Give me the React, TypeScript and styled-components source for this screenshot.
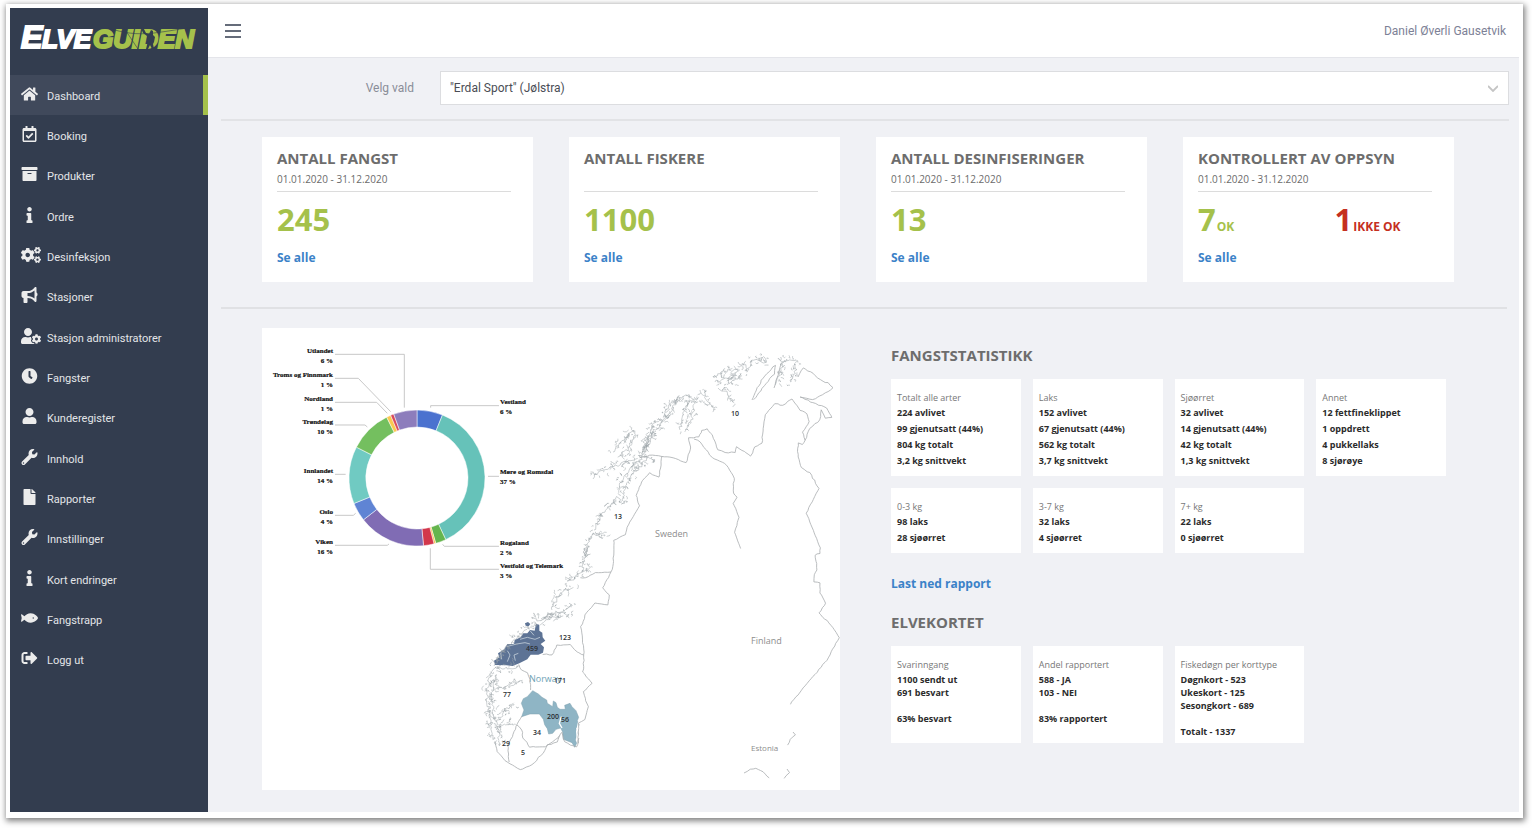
import React from 'react';
import styled, { createGlobalStyle } from 'styled-components';
import {
  FaHome, FaRegCalendarCheck, FaArchive, FaInfo, FaCogs, FaUserCog, FaClock,
  FaUser, FaWrench, FaFile, FaFish, FaSignOutAlt,
} from 'react-icons/fa';
import { FaBullhorn } from 'react-icons/fa6';

const GlobalStyle = createGlobalStyle`
  *, *::before, *::after { box-sizing: border-box; }
  body {
    margin: 0;
    background: #fff;
    font-family: "Open Sans", "Noto Sans", sans-serif;
    color: #6b6b6b;
  }
  ul, p, h2 { margin: 0; padding: 0; }
  ul { list-style: none; }
`;

const roboto = 'Roboto, "Liberation Sans", sans-serif';

/* ---------- shell ---------- */

const Frame = styled.div`
  display: flex;
  min-height: calc(100vh - 14px);
  margin: 4px 9px 10px 6px;
  padding: 4px 4px 6px;
  background: #fff;
  box-shadow: 1px 2px 6px 1px rgba(0, 0, 0, 0.5);
`;

const Sidebar = styled.nav`
  flex: 0 0 198px;
  background: #333d4f;
`;

const LogoLink = styled.a`
  display: block;
  height: 67px;
  padding: 8px 10px;
`;

const Menu = styled.ul`
  display: grid;
  grid-auto-rows: 1fr;
  min-height: 605px;
`;

const MenuLink = styled.a<{ $active?: boolean }>`
  display: flex;
  align-items: center;
  gap: 9px;
  height: 100%;
  padding: 3px 0 0 11px;
  border-right: 5px solid ${(p) => (p.$active ? '#a5c14b' : 'transparent')};
  background: ${(p) => (p.$active ? '#40495b' : 'transparent')};
  color: #e3e5e8;
  font: 11px/16px ${roboto};
  text-decoration: none;
`;

const MenuIcon = styled.span<{ $wide?: boolean }>`
  display: flex;
  width: 17px;
  padding-bottom: 6px;
  color: #ececec;
  svg { flex: none; width: ${(p) => (p.$wide ? 20 : 17)}px; height: 16px; }
`;

const Main = styled.div`
  flex: 1;
  min-width: 0;
  background: #f0f1f5;
`;

const Header = styled.header`
  display: flex;
  align-items: center;
  justify-content: space-between;
  height: 50px;
  padding: 0 13px 4px 16px;
  border-bottom: 1px solid #e4e5ea;
  background: #fff;
`;

const MenuButton = styled.button`
  display: flex;
  padding: 0;
  border: 0;
  background: none;
  color: #333d4f;
`;

const UserName = styled.span`
  color: #7d8196;
  font: 12px/16px ${roboto};
`;

const Content = styled.main`
  padding: 13px 10px 20px 13px;
`;

/* ---------- filter ---------- */

const Filter = styled.div`
  display: flex;
  align-items: center;
  gap: 26px;
  padding-bottom: 14px;
  border-bottom: 2px solid #e2e3e6;
`;

const FilterLabel = styled.label`
  flex: 0 0 193px;
  color: #8a8d98;
  font: 12px/16px ${roboto};
  text-align: right;
`;

const SelectBox = styled.div`
  position: relative;
  flex: 1;
  svg { position: absolute; right: 11px; top: 14px; pointer-events: none; }
`;

const Select = styled.select`
  display: block;
  width: 100%;
  height: 34px;
  padding: 0 30px 0 9px;
  border: 1px solid #dcdde0;
  border-radius: 0;
  appearance: none;
  background: #fff;
  color: #4a4d55;
  font: 12px/16px ${roboto};
`;

/* ---------- cards ---------- */

const Section = styled.section`
  display: grid;
  grid-template-columns: repeat(4, minmax(0, 1fr));
  column-gap: 36px;
  align-items: start;
  padding: 16px 55px 0 41px;
`;

const Divider = styled.hr`
  height: 2px;
  margin: 25px 2px 0 0;
  border: 0;
  background: #e0e1e4;
`;

const Card = styled.article`
  height: 145px;
  padding: 11px 22px 0 15px;
  background: #fff;
`;

const Title = styled.h2`
  color: #6d6d6d;
  font-size: 15px;
  font-weight: 700;
  line-height: 20px;
  white-space: nowrap;
`;

const Period = styled.p`
  height: 24px;
  border-bottom: 1px solid #dcdcdc;
  font-size: 10px;
  line-height: 22px;
`;

const Figures = styled.div`
  display: grid;
  grid-template-columns: minmax(0, 7fr) minmax(0, 5fr);
  height: 40px;
  margin-top: 7px;
`;

const Figure = styled.p<{ $bad?: boolean }>`
  color: ${(p) => (p.$bad ? '#c5301f' : '#a5c14b')};
  font-size: 31px;
  font-weight: 700;
  line-height: 40px;
  white-space: nowrap;
  small { margin-left: 1px; font-size: 12px; line-height: 16px; }
`;

const TextLink = styled.a`
  color: #3b82c8;
  font-size: 12px;
  font-weight: 700;
  line-height: 20px;
  text-decoration: none;
`;

const CardLink = styled(TextLink)`
  display: inline-block;
  margin-top: 9px;
`;

/* ---------- statistics ---------- */

const Overview = styled(Section)`
  padding-top: 19px;
`;

const MapPanel = styled.div`
  grid-column: span 2;
  background: #fff;
  svg { display: block; width: 100%; height: auto; }
`;

const Stats = styled.div`
  grid-column: span 2;
  padding: 17px 8px 0 15px;
`;

const Tiles = styled.div`
  display: grid;
  grid-template-columns: repeat(4, minmax(0, 1fr));
  gap: 12px;
  margin: 14px 0 18px;
`;

const Tile = styled.div<{ $tight?: boolean }>`
  padding: ${(p) => (p.$tight ? '11px 0 5px 6px' : '11px 0 7px 6px')};
  background: #fff;
  color: #2b2b2b;
  font-size: 9px;
  font-weight: 700;
  line-height: ${(p) => (p.$tight ? 13 : 16)}px;
  white-space: nowrap;
`;

const TileLabel = styled.p<{ $tight?: boolean }>`
  color: #777;
  font-weight: 400;
  line-height: ${(p) => (p.$tight ? 16 : 15)}px;
`;

const TileLine = styled.p`
  min-height: 13px;
`;

const SubTitle = styled(Title)`
  margin-top: 18px;
`;

/* ---------- drawings ---------- */

const Logo = () => (
  <svg width="178" height="40" viewBox="0 0 178 40" role="img" aria-label="Elveguiden">
    <g fontFamily='"Liberation Sans", sans-serif' fontWeight="700" fontStyle="italic" strokeWidth="2">
      <text x="1" y="32" fontSize="32" fill="#fff" stroke="#fff">E</text>
      <text x="22" y="32" fontSize="26" fill="#fff" stroke="#fff">LVE</text>
      <text x="73" y="32" fontSize="26" fill="#a5c14b" stroke="#a5c14b">GUIDEN</text>
    </g>
    <g fill="none" stroke="#333d4f" strokeWidth="0.6">
      <path d="M88 12C104 17 116 19 134 17C150 15 160 13 174 11" />
      <path d="M104 12L118 33" />
    </g>
    <path fill="#333d4f" d="M121 12l2-1 3 6 3 1 2-4 2 1 0 4 2 2-1 5-1 2 1 5-2 0-2-4-2 4-2 0 2-8-1-5-4-3z" />
  </svg>
);

type Point = [number, number];

const CX = 417;
const CY = 478;
const at = (deg: number, r: number) => {
  const a = (deg * Math.PI) / 180;
  return `${(CX + r * Math.sin(a)).toFixed(2)} ${(CY - r * Math.cos(a)).toFixed(2)}`;
};
const arc = (from: number, to: number) => {
  const large = to - from > 180 ? 1 : 0;
  return `M${at(from, 68)}A68 68 0 ${large} 1 ${at(to, 68)}L${at(to, 51)}A51 51 0 ${large} 0 ${at(from, 51)}Z`;
};

const slices: [number, number, string][] = [
  [0, 22, '#4b72cf'], [22, 155, '#66c2b9'], [155, 164, '#65b54e'], [164, 165.5, '#f5c242'],
  [165.5, 174.5, '#d2374c'], [174.5, 232, '#806cb4'], [232, 248, '#5f84d4'], [248, 297, '#70cac2'],
  [297, 333.5, '#74bf5f'], [333.5, 337.2, '#fac850'], [337.2, 340, '#d84a5c'], [340, 360, '#8d7dbc'],
];

const labels: [number, number, 'start' | 'end', string, string][] = [
  [333, 353, 'end', 'Utlandet', '6 %'],
  [333, 377, 'end', 'Troms og Finnmark', '1 %'],
  [333, 401, 'end', 'Nordland', '1 %'],
  [333, 424, 'end', 'Trøndelag', '10 %'],
  [333, 473, 'end', 'Innlandet', '14 %'],
  [333, 514, 'end', 'Oslo', '4 %'],
  [333, 544, 'end', 'Viken', '16 %'],
  [500, 404, 'start', 'Vestland', '6 %'],
  [500, 474, 'start', 'Møre og Romsdal', '37 %'],
  [500, 545, 'start', 'Rogaland', '2 %'],
  [500, 568, 'start', 'Vestfold og Telemark', '3 %'],
];

/* Deterministic noise so that the coastline is drawn the same each time. */
const noise = (seed: number) => {
  let s = seed * 7919 + 13;
  return () => {
    s = (s * 16807) % 2147483647;
    return s / 2147483647 - 0.5;
  };
};

const walk = (points: Point[], step: number, visit: (x: number, y: number) => void) => {
  for (let i = 1; i < points.length; i += 1) {
    const [x0, y0] = points[i - 1];
    const [x1, y1] = points[i];
    const n = Math.max(1, Math.round(Math.hypot(x1 - x0, y1 - y0) / step));
    for (let k = 1; k <= n; k += 1) visit(x0 + ((x1 - x0) * k) / n, y0 + ((y1 - y0) * k) / n);
  }
};

const rough = (points: Point[], amp: number, step: number, seed: number) => {
  const rnd = noise(seed);
  let d = `M${points[0].join(' ')}`;
  walk(points, step, (x, y) => {
    d += `L${(x + rnd() * amp).toFixed(1)} ${(y + rnd() * amp).toFixed(1)}`;
  });
  return d;
};

/* Short wandering strokes either side of a line: islets and fjord arms. */
const islets = (points: Point[], spread: number, seed: number) => {
  const rnd = noise(seed);
  let d = '';
  walk(points, 2, (x, y) => {
    let px = x + rnd() * spread;
    let py = y + rnd() * spread;
    d += `M${px.toFixed(1)} ${py.toFixed(1)}`;
    const dx = rnd() * 1.4;
    const dy = rnd() * 1.4;
    for (let k = 0; k < 4; k += 1) {
      px += dx + rnd() * 2.6;
      py += dy + rnd() * 2.6;
      d += `L${px.toFixed(1)} ${py.toFixed(1)}`;
    }
  });
  return d;
};

const borders: Point[][] = [
  [[792, 399], [783, 405], [775, 404], [765, 415], [763, 428], [762, 443], [755, 447], [751, 456], [737, 447], [735, 452], [728, 453], [718, 450], [712, 435], [707, 429], [702, 430], [699, 437], [688, 438], [691, 447], [686, 463], [673, 458], [661, 456], [650, 455], [640, 458]],
  [[792, 399], [800, 410], [807, 414], [809, 422], [803, 432], [805, 440], [802, 444], [798, 443], [798, 457], [801, 468], [810, 473], [819, 488], [806, 513], [813, 530], [820, 548], [820, 553], [815, 555], [817, 570], [814, 575], [814, 582], [820, 583], [820, 593], [826, 603], [819, 613], [833, 627], [839, 638], [827, 660], [817, 672], [790, 704]],
  [[694, 439], [698, 440], [712, 457], [727, 465], [734, 478], [733, 493], [737, 497], [733, 503], [739, 517], [735, 532], [741, 549]],
  [[662, 456], [659, 477], [650, 473], [643, 480], [636, 495], [639, 506], [627, 527], [625, 535], [614, 540], [613, 567], [611, 572], [603, 588], [609, 595], [608, 605], [595, 603], [585, 615], [581, 627], [584, 655], [583, 672], [592, 683], [583, 692], [588, 707], [585, 719], [579, 723], [578, 743]],
  [[584, 655], [577, 652], [570, 645], [557, 645], [552, 655], [543, 654]],
  [[611, 572], [595, 573], [588, 577], [580, 578]],
  [[798, 377], [803, 368], [813, 373], [820, 380], [828, 383], [833, 388], [825, 393], [813, 400], [800, 397], [813, 403], [827, 408], [832, 418], [825, 418], [821, 410], [820, 420], [810, 428], [805, 440]],
  [[519, 665], [521, 670], [527, 673], [530, 679], [531, 690]],
  [[522, 716], [517, 724], [512, 737], [508, 745], [509, 762]],
  [[517, 725], [522, 730], [523, 738], [530, 747], [545, 747], [553, 742], [560, 735]],
  [[495, 742], [497, 752], [507, 762], [520, 770], [532, 765], [543, 753], [548, 745], [557, 742], [562, 732], [565, 742], [570, 745], [577, 747], [579, 738]],
  [[752, 400], [755, 393], [763, 378], [775, 365], [774, 374], [764, 386], [754, 400]],
  [[774, 388], [777, 378], [780, 368], [782, 362]],
  [[744, 773], [750, 769], [756, 768], [763, 772], [769, 778]],
  [[793, 732], [795, 735], [790, 739], [788, 745]],
  [[787, 769], [789, 773], [784, 778]],
];

const coast: Point[][] = [
  [[640, 456], [648, 440], [652, 424], [664, 420], [670, 404], [685, 395], [692, 400]],
  [[642, 450], [653, 432], [670, 414], [678, 398]],
  [[680, 430], [684, 410], [692, 400], [698, 398]],
  [[686, 430], [692, 418], [695, 402]],
  [[700, 390], [706, 398], [714, 410]],
  [[715, 382], [732, 378], [737, 370], [728, 370], [715, 376]],
  [[718, 388], [726, 392], [733, 402]],
  [[727, 385], [735, 380], [742, 374]],
  [[738, 362], [748, 368], [752, 360], [766, 362], [762, 356]],
  [[775, 385], [782, 370], [783, 360], [795, 360], [796, 370], [790, 383]],
  [[593, 479], [600, 472], [612, 467], [625, 462], [637, 459]],
  [[613, 452], [618, 445], [626, 440], [632, 430], [634, 435], [628, 450], [618, 456]],
  [[619, 490], [622, 478], [630, 470], [640, 460], [648, 445], [655, 430]],
  [[622, 500], [626, 485], [636, 470], [648, 458], [655, 462]],
  [[594, 530], [600, 518], [608, 506], [618, 498], [626, 505]],
  [[585, 558], [586, 545], [592, 535], [602, 534], [608, 533]],
  [[582, 572], [584, 560], [587, 548]],
  [[565, 577], [573, 580], [582, 572], [592, 567]],
  [[552, 610], [557, 597], [565, 590], [574, 588]],
  [[532, 618], [540, 621], [548, 615], [555, 618], [565, 610], [572, 606]],
  [[540, 625], [550, 618], [557, 612], [570, 617]],
  [[495, 668], [488, 680], [487, 700], [490, 717], [493, 740]],
  [[497, 675], [492, 690], [493, 710], [498, 730], [500, 745]],
  [[491, 690], [503, 688], [514, 684], [522, 680]],
  [[496, 722], [505, 710], [515, 705]],
  [[495, 667], [505, 668], [518, 667]],
  [[497, 727], [505, 724], [514, 724]],
  [[494, 666], [501, 652], [513, 641], [526, 630], [536, 623]],
];

const NorwayChart = () => (
  <svg viewBox="262 328 578 462" role="img" aria-label="Fangst fordelt på fylke">
    <g stroke="#fff" strokeWidth="0.5">
      {slices.map(([from, to, color]) => <path key={from} d={arc(from, to)} fill={color} />)}
    </g>
    <g transform="translate(260 335) scale(0.3333)" fill="none" stroke="#bdbdbd" strokeWidth="2.5">
      <path d="M225 58H433V218M225 130H295L392 230M225 202H350L382 235M225 270H315L322 276M225 418H257M225 541H280L287 535M225 631H382L387 627M717 212H512V218M717 424H684M717 634H553L548 628M717 703H511V640" />
    </g>
    <g fontFamily='"Liberation Serif", serif' fontSize="7" fontWeight="700" fill="#111" stroke="#111" strokeWidth="0.2">
      {labels.map(([x, y, anchor, name, share]) => (
        <React.Fragment key={name}>
          <text x={x} y={y} textAnchor={anchor}>{name}</text>
          <text x={x} y={y + 10} textAnchor={anchor}>{share}</text>
        </React.Fragment>
      ))}
    </g>

    <g transform="translate(470 600) scale(0.3333)">
      <path fill="#5d7395" d="M75 195L72 182L88 172L84 160L103 148L112 132L132 132L134 120L152 112L160 100L172 100L180 90L194 92L198 72L208 74L208 92L217 98L218 112L226 122L212 132L222 142L219 158L205 164L182 164L172 178L160 184L148 190L128 198L110 196ZM165 70L174 66L181 72L176 79L167 77Z" />
      <path fill="#8fb5c5" stroke="#7da0ae" strokeWidth="1.5" d="M188 272L205 282L216 292L230 300L232 310L248 320L250 303L258 308L262 322L270 328L286 328L284 316L300 310L306 320L318 332L326 352L322 362L328 375L318 385L322 400L316 420L320 430L314 442L306 428L280 418L278 396L272 384L258 388L248 400L236 402L232 386L224 374L220 358L208 342L180 342L155 350L162 330L154 310L160 296L172 290Z" />
      <path fill="none" stroke="#c2ced8" strokeWidth="2.5" d="M95 178L92 158M112 185L120 165L112 152M136 182L132 165L145 160M110 140L140 132L165 128L180 132M150 118L172 112L195 118L210 112M180 92L192 106" />
      <path fill="none" stroke="#fff" strokeWidth="4" d="M276 384L268 370L274 350M326 365L320 395L322 418" />
    </g>
    <g fill="none" stroke="#a8acae" strokeWidth="0.8" strokeLinejoin="round">
      {borders.map((line, i) => <path key={i} d={rough(line, 1, 3, i + 1)} />)}
    </g>
    <g fill="none" stroke="#9aa2a6" strokeWidth="0.5" strokeLinejoin="round">
      {coast.map((line, i) => (
        <React.Fragment key={i}>
          <path d={rough(line, 3, 2, i + 31)} />
          <path d={islets(line, 8, i + 71)} />
        </React.Fragment>
      ))}
    </g>

    <g fontSize="9" fill="#8d8d8d">
      <text x="655" y="537">Sweden</text>
      <text x="751" y="644">Finland</text>
      <text x="751" y="751" fontSize="8">Estonia</text>
      <text x="529" y="682" fontSize="9" fill="#6fa3b5">Norway</text>
    </g>
    <g fontSize="7" fontWeight="600" fill="#2c2f33" textAnchor="middle">
      <text x="735" y="416">10</text>
      <text x="618" y="519">13</text>
      <text x="565" y="640">123</text>
      <text x="532" y="651">459</text>
      <text x="560" y="683">171</text>
      <text x="507" y="697">77</text>
      <text x="553" y="719">200</text>
      <text x="565" y="722">56</text>
      <text x="537" y="735">34</text>
      <text x="506" y="746">29</text>
      <text x="523" y="755">5</text>
    </g>
  </svg>
);

/* ---------- data ---------- */

type MenuItem = { name: string; Icon: React.ComponentType; wide?: boolean };
const menu: MenuItem[] = [
  { name: 'Dashboard', Icon: FaHome },
  { name: 'Booking', Icon: FaRegCalendarCheck },
  { name: 'Produkter', Icon: FaArchive },
  { name: 'Ordre', Icon: FaInfo },
  { name: 'Desinfeksjon', Icon: FaCogs, wide: true },
  { name: 'Stasjoner', Icon: FaBullhorn },
  { name: 'Stasjon administratorer', Icon: FaUserCog, wide: true },
  { name: 'Fangster', Icon: FaClock },
  { name: 'Kunderegister', Icon: FaUser },
  { name: 'Innhold', Icon: FaWrench },
  { name: 'Rapporter', Icon: FaFile },
  { name: 'Innstillinger', Icon: FaWrench },
  { name: 'Kort endringer', Icon: FaInfo },
  { name: 'Fangstrapp', Icon: FaFish },
  { name: 'Logg ut', Icon: FaSignOutAlt },
];

type Value = { value: string; note?: string; bad?: boolean };
const cards: { title: string; period: string; values: Value[] }[] = [
  { title: 'ANTALL FANGST', period: '01.01.2020 - 31.12.2020', values: [{ value: '245' }] },
  { title: 'ANTALL FISKERE', period: '', values: [{ value: '1100' }] },
  { title: 'ANTALL DESINFISERINGER', period: '01.01.2020 - 31.12.2020', values: [{ value: '13' }] },
  {
    title: 'KONTROLLERT AV OPPSYN',
    period: '01.01.2020 - 31.12.2020',
    values: [{ value: '7', note: 'OK' }, { value: '1', note: 'IKKE OK', bad: true }],
  },
];

type TileData = { label: string; lines: string[] };
const species: TileData[] = [
  { label: 'Totalt alle arter', lines: ['224 avlivet', '99 gjenutsatt (44%)', '804 kg totalt', '3,2 kg snittvekt'] },
  { label: 'Laks', lines: ['152 avlivet', '67 gjenutsatt (44%)', '562 kg totalt', '3,7 kg snittvekt'] },
  { label: 'Sjøørret', lines: ['32 avlivet', '14 gjenutsatt (44%)', '42 kg totalt', '1,3 kg snittvekt'] },
  { label: 'Annet', lines: ['12 fettfineklippet', '1 oppdrett', '4 pukkellaks', '8 sjørøye'] },
  { label: '0-3 kg', lines: ['98 laks', '28 sjøørret'] },
  { label: '3-7 kg', lines: ['32 laks', '4 sjøørret'] },
  { label: '7+ kg', lines: ['22 laks', '0 sjøørret'] },
];
const permits: TileData[] = [
  { label: 'Svarinngang', lines: ['1100 sendt ut', '691 besvart', '', '63% besvart'] },
  { label: 'Andel rapportert', lines: ['588 - JA', '103 - NEI', '', '83% rapportert'] },
  { label: 'Fiskedøgn per korttype', lines: ['Døgnkort - 523', 'Ukeskort - 125', 'Sesongkort - 689', '', 'Totalt - 1337'] },
];

const TileGrid = ({ items, tight }: { items: TileData[]; tight?: boolean }) => (
  <Tiles>
    {items.map((item) => (
      <Tile key={item.label} $tight={tight}>
        <TileLabel $tight={tight}>{item.label}</TileLabel>
        {item.lines.map((line, i) => <TileLine key={i}>{line}</TileLine>)}
      </Tile>
    ))}
  </Tiles>
);

export default function App() {
  return (
    <>
      <GlobalStyle />
      <Frame>
        <Sidebar>
          <LogoLink href="#"><Logo /></LogoLink>
          <Menu>
            {menu.map(({ name, Icon, wide }, i) => (
              <li key={name}>
                <MenuLink href="#" $active={i === 0}>
                  <MenuIcon $wide={wide}><Icon /></MenuIcon>
                  {name}
                </MenuLink>
              </li>
            ))}
          </Menu>
        </Sidebar>
        <Main>
          <Header>
            <MenuButton type="button" aria-label="Meny">
              <svg width="18" height="16" viewBox="0 0 18 16" fill="none" stroke="currentColor" strokeWidth="1.6">
                <path d="M1 2H17M1 8H17M1 14H17" />
              </svg>
            </MenuButton>
            <UserName>Daniel Øverli Gausetvik</UserName>
          </Header>
          <Content>
            <Filter>
              <FilterLabel htmlFor="vald">Velg vald</FilterLabel>
              <SelectBox>
                <Select id="vald" defaultValue="erdal">
                  <option value="erdal">"Erdal Sport" (Jølstra)</option>
                </Select>
                <svg width="10" height="7" viewBox="0 0 10 7" fill="none" stroke="#c4c4c4" strokeWidth="1.8">
                  <path d="M0 1L5 6L10 1" />
                </svg>
              </SelectBox>
            </Filter>
            <Section>
              {cards.map((card) => (
                <Card key={card.title}>
                  <Title>{card.title}</Title>
                  <Period>{card.period}</Period>
                  <Figures>
                    {card.values.map((v) => (
                      <Figure key={v.value} $bad={v.bad}>
                        {v.value}
                        {v.note && <small>{v.note}</small>}
                      </Figure>
                    ))}
                  </Figures>
                  <CardLink href="#">Se alle</CardLink>
                </Card>
              ))}
            </Section>
            <Divider />
            <Overview>
              <MapPanel><NorwayChart /></MapPanel>
              <Stats>
                <Title>FANGSTSTATISTIKK</Title>
                <TileGrid items={species} />
                <TextLink href="#">Last ned rapport</TextLink>
                <SubTitle>ELVEKORTET</SubTitle>
                <TileGrid items={permits} tight />
              </Stats>
            </Overview>
          </Content>
        </Main>
      </Frame>
    </>
  );
}
